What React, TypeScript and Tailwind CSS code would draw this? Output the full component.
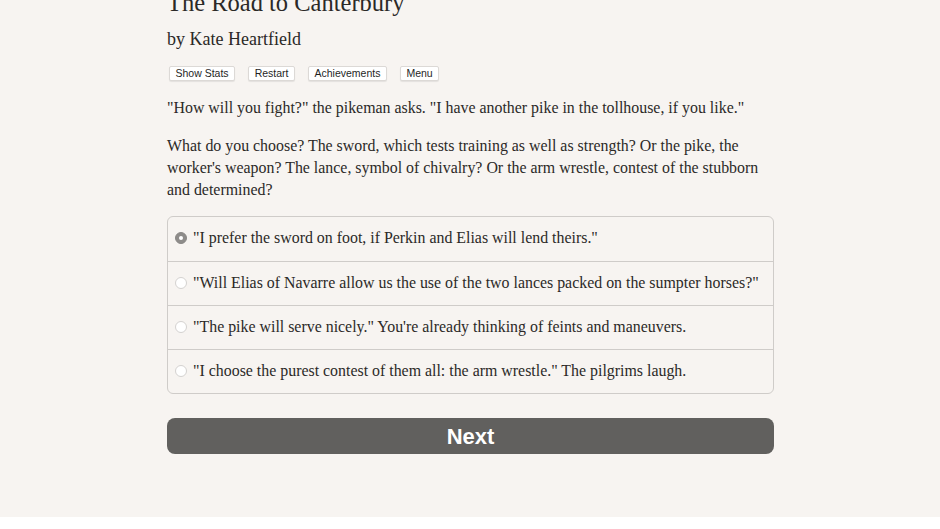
import { useState } from "react";

const CHOICES = [
  '"I prefer the sword on foot, if Perkin and Elias will lend theirs."',
  '"Will Elias of Navarre allow us the use of the two lances packed on the sumpter horses?"',
  '"The pike will serve nicely." You\'re already thinking of feints and maneuvers.',
  '"I choose the purest contest of them all: the arm wrestle." The pilgrims laugh.',
];

const SERIF = { fontFamily: '"Liberation Serif", "DejaVu Serif", serif' };

export default function App() {
  const [picked, setPicked] = useState(0);

  return (
    <div className="min-h-[529px] w-full bg-[#f7f4f1] text-[#2b2927]" style={SERIF}>
      <div className="mx-auto w-[608px] pl-px">
        <h1 className="-mt-[12px] text-[24.5px] leading-[30px]">The Road to Canterbury</h1>
        <h2 className="mt-[9px] text-[18px] leading-[24px]">by Kate Heartfield</h2>

        <div className="mt-[15px] flex gap-[13px] pl-[2px] font-['Liberation_Sans',Arial,sans-serif] text-[10.5px]">
          {["Show Stats", "Restart", "Achievements", "Menu"].map((b) => (
            <button
              key={b}
              className="h-[15px] rounded-[2px] border border-[#dcd9d6] bg-white px-[5.5px] leading-[13px] text-[#1f1f1f] shadow-[0_1px_1px_rgba(0,0,0,0.08)]"
            >
              {b}
            </button>
          ))}
        </div>

        <p className="mt-[16px] text-[15.9px] leading-[22px]">
          "How will you fight?" the pikeman asks. "I have another pike in the tollhouse, if you like."
        </p>
        <p className="mt-[16px] text-[15.9px] leading-[22px]">
          What do you choose? The sword, which tests training as well as strength? Or the pike, the worker's weapon? The lance, symbol of chivalry? Or the arm wrestle, contest of the stubborn and determined?
        </p>

        <div className="mt-[15px] overflow-hidden rounded-[6px] border border-[#cfccc9]">
          {CHOICES.map((c, i) => (
            <label
              key={i}
              onClick={() => setPicked(i)}
              className={`flex h-[44px] cursor-pointer items-center gap-[6px] pb-[2px] pl-[7px] text-[15.9px] ${i > 0 ? "border-t border-[#cfccc9]" : ""}`}
            >
              <span
                className={`flex h-[12px] w-[12px] shrink-0 items-center justify-center rounded-full border ${
                  picked === i ? "border-[#8a8886] bg-[#8e8c8a]" : "border-[#d4d2d0] bg-white"
                }`}
              >
                {picked === i ? <span className="h-[4px] w-[4px] rounded-full bg-white" /> : null}
              </span>
              <span>{c}</span>
            </label>
          ))}
        </div>

        <button className="mt-[24px] h-[36px] w-full rounded-[8px] bg-[#61605e] font-['Liberation_Sans',Arial,sans-serif] text-[22px] font-bold text-white">
          Next
        </button>
      </div>
    </div>
  );
}
